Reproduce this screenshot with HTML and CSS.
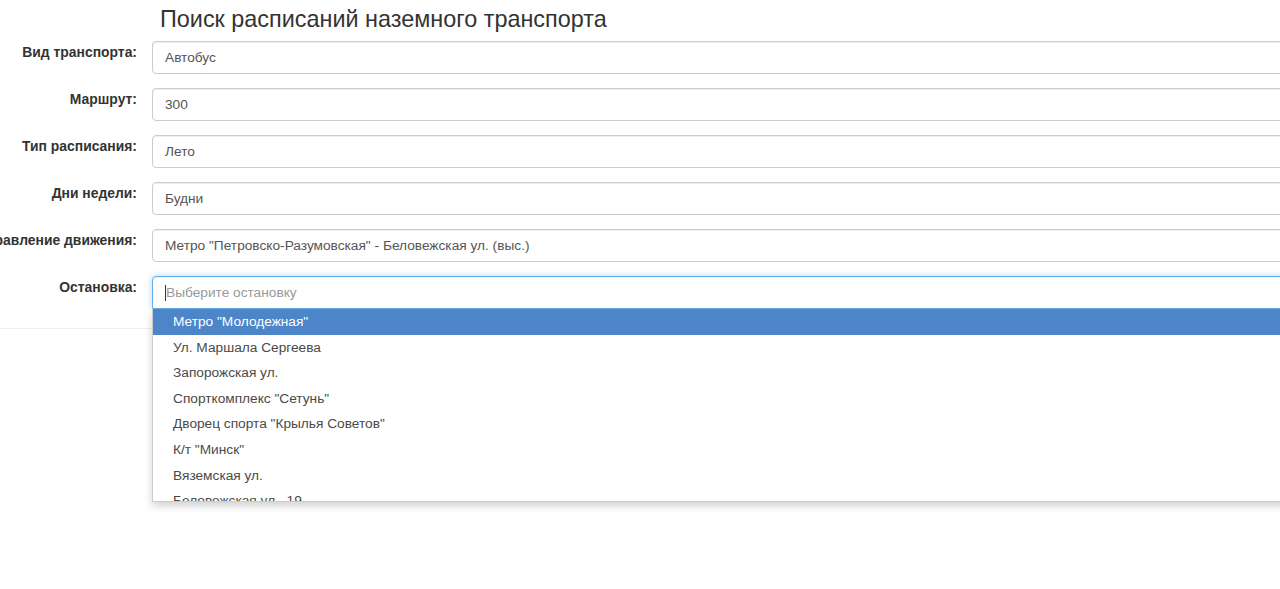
FILE: index.html
```html
<!DOCTYPE html>
<html lang="ru">
<head>
<meta charset="utf-8">
<title>Поиск расписаний наземного транспорта</title>
<link rel="stylesheet" href="styles.css">
</head>
<body>
<div class="page">
  <h1 class="title">Поиск расписаний наземного транспорта</h1>
  <form class="form">
    <div class="row">
      <div class="label"><span>Вид транспорта:</span></div>
      <div class="control">Автобус</div>
    </div>
    <div class="row">
      <div class="label"><span>Маршрут:</span></div>
      <div class="control">300</div>
    </div>
    <div class="row">
      <div class="label"><span>Тип расписания:</span></div>
      <div class="control">Лето</div>
    </div>
    <div class="row">
      <div class="label"><span>Дни недели:</span></div>
      <div class="control">Будни</div>
    </div>
    <div class="row">
      <div class="label"><span>Направление движения:</span></div>
      <div class="control">Метро "Петровско-Разумовская" - Беловежская ул. (выс.)</div>
    </div>
    <div class="row row-last">
      <div class="label"><span>Остановка:</span></div>
      <div class="control-wrap">
        <div class="control focused"><span class="caret"></span><span class="placeholder">Выберите остановку</span></div>
        <ul class="dropdown">
          <li class="item active">Метро "Молодежная"</li>
          <li class="item">Ул. Маршала Сергеева</li>
          <li class="item">Запорожская ул.</li>
          <li class="item">Спорткомплекс "Сетунь"</li>
          <li class="item">Дворец спорта "Крылья Советов"</li>
          <li class="item">К/т "Минск"</li>
          <li class="item">Вяземская ул.</li>
          <li class="item">Беловежская ул., 19</li>
          <li class="item">Беловежская ул.</li>
        </ul>
      </div>
    </div>
  </form>
</div>
</body>
</html>
```
FILE: styles.css
```css
html, body {
  margin: 0;
  padding: 0;
  overflow: hidden;
  background: #fff;
}
body {
  font-family: "Liberation Sans", Arial, sans-serif;
  color: #333;
  width: 1280px;
  height: 589px;
}
.page {
  width: 1280px;
}
.title {
  margin: 6px 0 9px 160px;
  font-size: 23.4px;
  line-height: 26px;
  font-weight: normal;
  color: #333;
}
.form {
  margin: 0;
  padding-bottom: 19px;
  border-bottom: 1px solid #eee;
}
.row {
  display: flex;
  align-items: flex-start;
  margin-bottom: 14px;
}
.row-last {
  margin-bottom: 0;
}
.label {
  flex: 0 0 137px;
  width: 137px;
  display: flex;
  justify-content: flex-end;
  padding-top: 1px;
  margin-right: 15px;
  font-size: 13.9px;
  font-weight: bold;
  line-height: 20px;
  white-space: nowrap;
  color: #333;
}
.control-wrap {
  position: relative;
  flex: 0 0 1200px;
}
.control {
  flex: 0 0 1200px;
  width: 1200px;
  box-sizing: border-box;
  height: 33px;
  padding: 6px 12px;
  font-size: 13.7px;
  line-height: 20px;
  color: #555;
  background: #fff;
  border: 1px solid #ccc;
  border-radius: 4px;
  box-shadow: inset 0 1px 1px rgba(0, 0, 0, 0.075);
  white-space: nowrap;
}
.focused {
  border-color: #66afe9;
  box-shadow: inset 0 1px 1px rgba(0, 0, 0, 0.075), 0 0 6px rgba(102, 175, 233, 0.5);
  display: flex;
  align-items: center;
  border-radius: 4px 4px 0 0;
}
.caret {
  display: inline-block;
  width: 1px;
  height: 16px;
  background: #333;
}
.placeholder {
  color: #999;
  font-size: 13.7px;
}
.dropdown {
  position: absolute;
  top: 33px;
  left: 0;
  width: 1200px;
  height: 193px;
  overflow: hidden;
  margin: 0;
  padding: 0;
  list-style: none;
  background: #fff;
  border: 1px solid #ccc;
  border-top: none;
  box-sizing: border-box;
  box-shadow: 0 4px 8px rgba(0, 0, 0, 0.18);
}
.item {
  padding: 3px 20px;
  font-size: 13.7px;
  line-height: 19.6px;
  color: #4a4a4a;
  white-space: nowrap;
}
.item.active {
  background: #4d86c8;
  color: #fff;
}
```
